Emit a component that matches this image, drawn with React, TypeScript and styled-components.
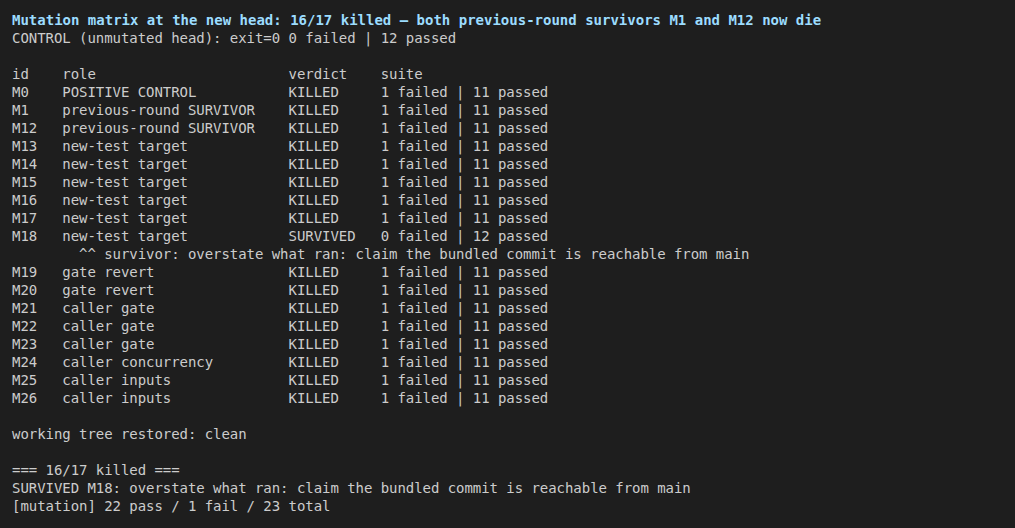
import React from "react";
import styled, { createGlobalStyle } from "styled-components";

const Global = createGlobalStyle`
  html, body { margin: 0; padding: 0; background: #1e1e1e; }
  body { width: 1015px; height: 528px; overflow: hidden; }
`;

const Terminal = styled.div`
  box-sizing: border-box;
  width: 1015px;
  height: 528px;
  background: #1e1e1e;
  color: #cccccc;
  padding: 11px 12px;
  font-family: "DejaVu Sans Mono", "Liberation Mono", monospace;
  font-size: 14px;
  line-height: 18px;
  display: flex;
  flex-direction: column;
`;

const Line = styled.div<{ $heading?: boolean }>`
  white-space: pre;
  height: 18px;
  color: ${(p) => (p.$heading ? "#9cdcfe" : "#cccccc")};
  font-weight: ${(p) => (p.$heading ? 700 : 400)};
  letter-spacing: ${(p) => (p.$heading ? "0" : "-0.05px")};
`;

type Row = { id: string; role: string; verdict: string; suite: string; note?: string };

const rows: Row[] = [
  { id: "M0", role: "POSITIVE CONTROL", verdict: "KILLED", suite: "1 failed | 11 passed" },
  { id: "M1", role: "previous-round SURVIVOR", verdict: "KILLED", suite: "1 failed | 11 passed" },
  { id: "M12", role: "previous-round SURVIVOR", verdict: "KILLED", suite: "1 failed | 11 passed" },
  { id: "M13", role: "new-test target", verdict: "KILLED", suite: "1 failed | 11 passed" },
  { id: "M14", role: "new-test target", verdict: "KILLED", suite: "1 failed | 11 passed" },
  { id: "M15", role: "new-test target", verdict: "KILLED", suite: "1 failed | 11 passed" },
  { id: "M16", role: "new-test target", verdict: "KILLED", suite: "1 failed | 11 passed" },
  { id: "M17", role: "new-test target", verdict: "KILLED", suite: "1 failed | 11 passed" },
  {
    id: "M18",
    role: "new-test target",
    verdict: "SURVIVED",
    suite: "0 failed | 12 passed",
    note: "^^ survivor: overstate what ran: claim the bundled commit is reachable from main",
  },
  { id: "M19", role: "gate revert", verdict: "KILLED", suite: "1 failed | 11 passed" },
  { id: "M20", role: "gate revert", verdict: "KILLED", suite: "1 failed | 11 passed" },
  { id: "M21", role: "caller gate", verdict: "KILLED", suite: "1 failed | 11 passed" },
  { id: "M22", role: "caller gate", verdict: "KILLED", suite: "1 failed | 11 passed" },
  { id: "M23", role: "caller gate", verdict: "KILLED", suite: "1 failed | 11 passed" },
  { id: "M24", role: "caller concurrency", verdict: "KILLED", suite: "1 failed | 11 passed" },
  { id: "M25", role: "caller inputs", verdict: "KILLED", suite: "1 failed | 11 passed" },
  { id: "M26", role: "caller inputs", verdict: "KILLED", suite: "1 failed | 11 passed" },
];

const fmt = (a: string, b: string, c: string, d: string) =>
  a.padEnd(6) + b.padEnd(27) + c.padEnd(11) + d;

export default function App() {
  return (
    <>
      <Global />
      <Terminal>
        <Line $heading>
          Mutation matrix at the new head: 16/17 killed — both previous-round survivors M1 and M12 now die
        </Line>
        <Line>CONTROL (unmutated head): exit=0 0 failed | 12 passed</Line>
        <Line> </Line>
        <Line>{fmt("id", "role", "verdict", "suite")}</Line>
        {rows.map((r) => (
          <React.Fragment key={r.id}>
            <Line>{fmt(r.id, r.role, r.verdict, r.suite)}</Line>
            {r.note && <Line>{"        " + r.note}</Line>}
          </React.Fragment>
        ))}
        <Line> </Line>
        <Line>working tree restored: clean</Line>
        <Line> </Line>
        <Line>=== 16/17 killed ===</Line>
        <Line>SURVIVED M18: overstate what ran: claim the bundled commit is reachable from main</Line>
        <Line>[mutation] 22 pass / 1 fail / 23 total</Line>
      </Terminal>
    </>
  );
}
